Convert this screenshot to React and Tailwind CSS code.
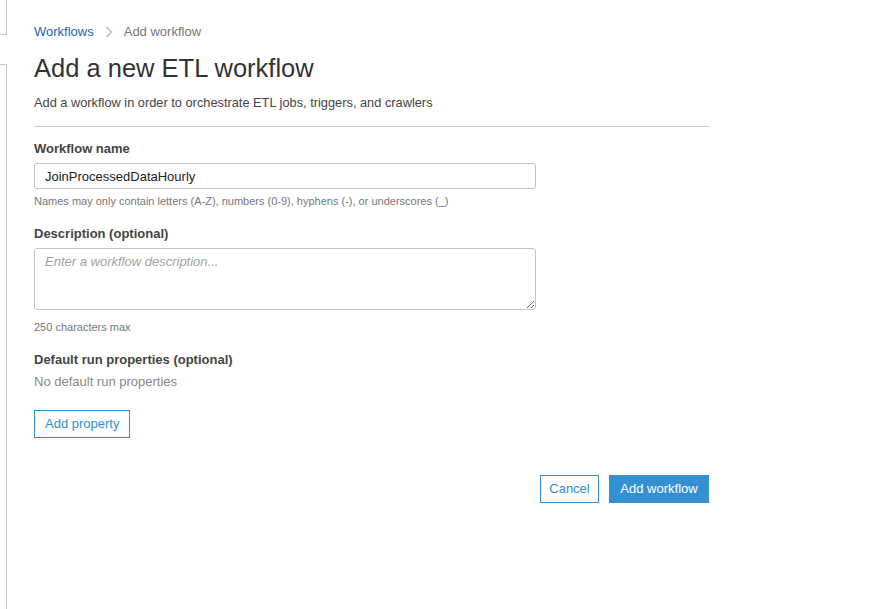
import React, { useState } from "react";

const App = () => {
  const [name, setName] = useState("JoinProcessedDataHourly");
  const [description, setDescription] = useState("");

  return (
    <div className="flex min-h-screen bg-white font-['Liberation_Sans','Helvetica_Neue',Arial,sans-serif] text-[#444]">
      {/* Collapsed side nav edge */}
      <div className="flex w-[7px] shrink-0 flex-col">
        <div className="h-[35px] border-r border-b border-[#c8c8c8]" />
        <div className="mt-[29px] flex-1 border-t border-r border-[#c8c8c8]" />
      </div>

      <main className="w-[702px] pl-[27px] pt-[24px]">
        {/* Breadcrumb */}
        <nav className="flex items-center text-[13px] leading-4">
          <a href="#" className="text-[#1b63b9]">
            Workflows
          </a>
          <svg
            className="ml-[11px] mr-[11px]"
            width="8"
            height="12"
            viewBox="0 0 8 12"
            fill="none"
          >
            <path d="M1.5 1l5 5-5 5" stroke="#b5b5b5" strokeWidth="1.2" />
          </svg>
          <span className="text-[#777]">Add workflow</span>
        </nav>

        {/* Page header */}
        <h1 className="mt-[12px] text-[25.5px] leading-8 text-[#333]">
          Add a new ETL workflow
        </h1>
        <p className="mt-[11px] text-[12.8px] leading-4 text-[#444]">
          Add a workflow in order to orchestrate ETL jobs, triggers, and crawlers
        </p>

        <div className="mt-[15px] border-t border-[#c8c8c8]" />

        {/* Workflow name */}
        <label className="mt-[14px] block text-[13px] font-bold leading-4 text-[#444]">
          Workflow name
        </label>
        <input
          value={name}
          onChange={(e) => setName(e.target.value)}
          className="mt-[6px] block h-[26px] w-[502px] rounded-[3px] border border-[#c2c2c2] px-[10px] text-[13px] text-[#222] outline-none"
        />
        <p className="mt-[5px] text-[11px] leading-[14px] text-[#777]">
          Names may only contain letters (A-Z), numbers (0-9), hyphens (-), or underscores (_)
        </p>

        {/* Description */}
        <label className="mt-[18px] block text-[13px] font-bold leading-4 text-[#444]">
          Description (optional)
        </label>
        <textarea
          value={description}
          onChange={(e) => setDescription(e.target.value)}
          placeholder="Enter a workflow description..."
          className="mt-[6px] block h-[62px] w-[502px] rounded-[3px] border border-[#c2c2c2] px-[10px] py-[5px] text-[13px] italic leading-4 text-[#222] outline-none placeholder:text-[#9aa5a5]"
        />
        <p className="mt-[10px] text-[11px] leading-[14px] text-[#777]">
          250 characters max
        </p>

        {/* Default run properties */}
        <label className="mt-[18px] block text-[13px] font-bold leading-4 text-[#444]">
          Default run properties (optional)
        </label>
        <p className="mt-[6px] text-[13px] leading-4 text-[#888]">
          No default run properties
        </p>
        <button
          type="button"
          className="mt-[20px] h-[28px] border border-[#2f8fd3] px-[10px] text-[13px] text-[#2f8fd3]"
        >
          Add property
        </button>

        {/* Actions */}
        <div className="mt-[37px] flex justify-end gap-[10px]">
          <button
            type="button"
            className="h-[28px] w-[59px] border border-[#2f8fd3] text-[13px] text-[#2f8fd3]"
          >
            Cancel
          </button>
          <button
            type="button"
            className="h-[28px] w-[100px] bg-[#3391d2] text-[13px] text-white"
          >
            Add workflow
          </button>
        </div>
      </main>
    </div>
  );
};

export default App;
